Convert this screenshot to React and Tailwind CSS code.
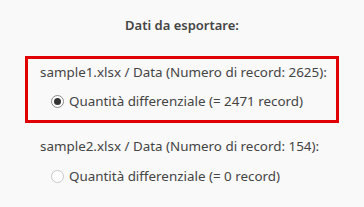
function Radio({ checked, label }) {
  return (
    <div className="flex items-center h-5 pl-[11px] gap-[5px]">
      <span
        className={
          'flex items-center justify-center w-[13px] h-[13px] rounded-full border bg-white ' +
          (checked ? 'border-[#8a8a8a]' : 'border-[#c8c8c8]')
        }
      >
        {checked && <span className="w-[7px] h-[7px] rounded-full bg-[#333]" />}
      </span>
      <span>{label}</span>
    </div>
  );
}

export default function App() {
  return (
    <div
      className="w-[364px] h-[207px] bg-[#f9f9f9] text-[#444] text-[13.4px] leading-5"
      style={{ fontFamily: '"Noto Sans", sans-serif' }}
    >
      <div className="pt-[15px] text-center font-semibold text-[13px]">Dati da esportare:</div>

      <div className="mt-[21px] mx-[25px] border-[3px] border-[#e00000] pt-[3px] pb-[9px] pl-3">
        <div>sample1.xlsx / Data (Numero di record: 2625):</div>
        <div className="mt-[9px]">
          <Radio checked label="Quantità differenziale (= 2471 record)" />
        </div>
      </div>

      <div className="mt-[13px] pl-10">
        <div>sample2.xlsx / Data (Numero di record: 154):</div>
        <div className="mt-[10px]">
          <Radio label="Quantità differenziale (= 0 record)" />
        </div>
      </div>
    </div>
  );
}
